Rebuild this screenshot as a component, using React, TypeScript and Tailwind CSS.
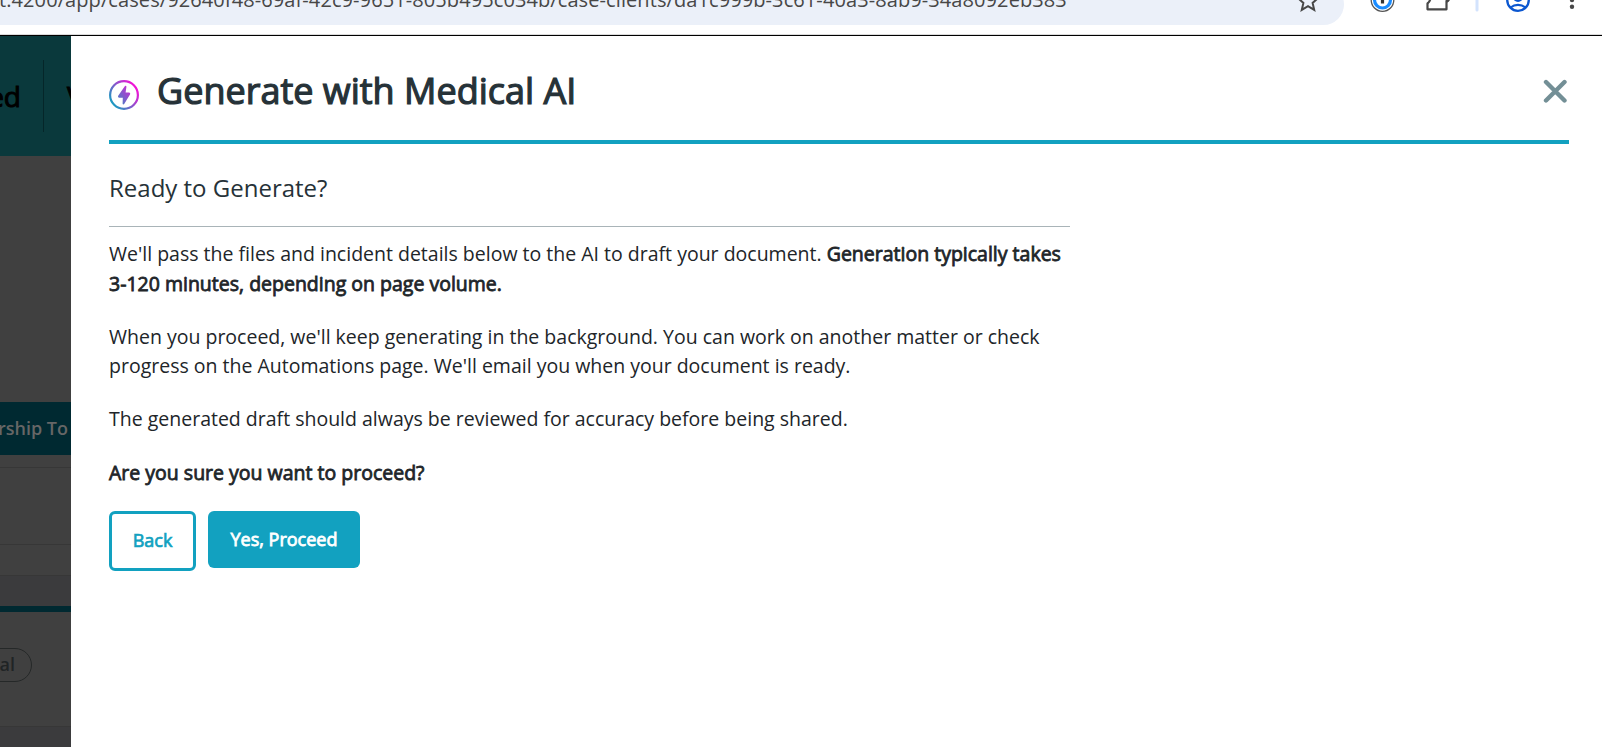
import type { ReactNode } from "react";

function AddressBar() {
  return (
    <div className="relative h-9 w-full shrink-0 overflow-hidden border-b border-black bg-white">
      <div className="absolute -top-4 left-0 h-[41px] w-[1344px] rounded-r-full bg-[#ebf0f9]" />
      <span className="absolute -top-[14px] -left-px text-xl leading-[27px] tracking-[0.090px] whitespace-nowrap text-[#474747]">
        t.4200/app/cases/92640f48-69af-42c9-9651-805b495c034b/case-clients/da1c999b-3c61-40a3-8ab9-34a8092eb383
      </span>
      <svg className="absolute top-0 left-[1240px]" width="362" height="34" viewBox="0 0 362 34" fill="none">
        <path
          d="M68 -9l2.9 6.5 7 .7-5.3 4.7 1.6 7L68 6.1l-6.200 3.800 1.600-7-5.300-4.700 7-.7z"
          stroke="#474747"
          strokeWidth="2"
        />
        <circle cx="142.500" cy="0" r="11.300" stroke="#555" strokeWidth="1.300" />
        <circle cx="142.500" cy="0" r="8" stroke="#1a8cff" strokeWidth="3.200" />
        <path d="M142.500 -6v9.500" stroke="#333" strokeWidth="3.200" />
        <path
          d="M190.500 -3c0 3-1 5-3 6.500V9.300h19v-9"
          stroke="#474747"
          strokeWidth="2.200"
          strokeLinejoin="round"
        />
        <path d="M206 -3h4.500c0 3.500-1.700 5.500-4.500 6z" fill="#474747" />
        <path d="M237 -6v16" stroke="#d3e3fd" strokeWidth="3" strokeLinecap="round" />
        <circle cx="278" cy="0" r="10.800" stroke="#0b57d0" strokeWidth="2.300" />
        <circle cx="278" cy="-3" r="4" stroke="#0b57d0" strokeWidth="2.200" />
        <path d="M270.500 7.500c4.500-3.600 10.500-3.600 15 0" stroke="#0b57d0" strokeWidth="2.200" />
        <circle cx="332" cy="0" r="2.200" fill="#474747" />
        <circle cx="332" cy="6.800" r="2.200" fill="#474747" />
      </svg>
      <div className="absolute bottom-0 h-px w-full bg-[#dadada]" />
    </div>
  );
}

function DimmedPage() {
  return (
    <div className="flex w-[71px] shrink-0 flex-col overflow-hidden bg-[#404040] whitespace-nowrap">
      <div className="flex h-[120px] shrink-0 items-center bg-[#0a393c] text-[28px] text-black">
        <div className="flex w-[43px] shrink-0 justify-end pr-[22px] [-webkit-text-stroke:1px]">ed</div>
        <div className="h-[72px] w-px shrink-0 bg-[#052629]" />
        <span className="ml-[23px] [-webkit-text-stroke:1px]">V</span>
      </div>
      <div className="h-[246px] shrink-0" />
      <div className="flex h-[53px] shrink-0 items-center justify-end bg-[#002931] pr-[3px] pb-0.5 text-lg font-semibold text-[#666]">
        rship To
      </div>
      <div className="h-[13px] shrink-0 border-b border-[#373737]" />
      <div className="h-[77px] shrink-0 border-b border-[#373737]" />
      <div className="h-[31px] shrink-0 border-b border-[#373737]" />
      <div className="h-[30px] shrink-0 bg-[#3b3b3d]" />
      <div className="h-1.5 shrink-0 bg-[#002931]" />
      <div className="h-[115px] shrink-0 border-b border-[#373737] pt-9">
        <div className="-ml-10 flex h-[34px] w-[72px] items-center justify-end rounded-full border border-[#252828] pr-4 pb-0.5 text-lg font-semibold text-[#202425]">
          al
        </div>
      </div>
      <div className="grow bg-[#3b3b3d]" />
    </div>
  );
}

function BoltIcon() {
  return (
    <svg className="mt-2 shrink-0" width="30" height="30" viewBox="0 0 30 30" fill="none">
      <defs>
        <linearGradient id="bolt" x1="2" y1="24" x2="26" y2="6" gradientUnits="userSpaceOnUse">
          <stop stopColor="#12a1c0" />
          <stop offset="1" stopColor="#f312d6" />
        </linearGradient>
      </defs>
      <circle cx="15" cy="15" r="13.900" stroke="url(#bolt)" strokeWidth="2.200" />
      <path
        d="M15.800 6.200 9.200 15.800c-.5.800 0 1.900 1 1.900h3.600l-.2 5.800c0 1 1 1.300 1.600.5l5.800-9.500c.6-1 0-2-1-2h-3.400l.8-5.600c.1-1.200-1-1.700-1.600-.7z"
        fill="url(#bolt)"
      />
    </svg>
  );
}

function Strong({ children }: { children: ReactNode }) {
  return <span className="[-webkit-text-stroke:0.8px]">{children}</span>;
}

export default function App() {
  return (
    <div className="flex h-[747px] w-[1602px] flex-col overflow-hidden bg-white font-['Open_Sans',sans-serif] text-[#212529]">
      <AddressBar />
      <div className="flex min-h-0 grow">
        <DimmedPage />
        <main className="flex grow flex-col pr-[33px] pl-[38px]">
          <header className="flex h-[108px] items-center border-b-4 border-[#12a1c0] pt-[5px]">
            <BoltIcon />
            <h1 className="ml-[18px] text-4xl whitespace-nowrap text-[#263238] [-webkit-text-stroke:1.2px]">
              Generate with Medical AI
            </h1>
            <button className="mr-[2px] ml-auto" aria-label="Close">
              <svg width="24" height="24" viewBox="0 0 24 24">
                <path d="M3 3 21.500 21.500M21.500 3 3 21.500" stroke="#738f96" strokeWidth="4.400" strokeLinecap="round" />
              </svg>
            </button>
          </header>
          <section className="w-[961px] text-[19.5px] leading-[29.25px]">
            <h2 className="h-[83px] border-b border-[#a9b4b8] pt-7 text-2xl leading-8 text-[#263238]">
              Ready to Generate?
            </h2>
            <p className="mt-[12.3px]">
              We'll pass the files and incident details below to the AI to draft your document.{" "}
              <Strong>Generation typically takes 3-120 minutes, depending on page volume.</Strong>
            </p>
            <p className="mt-6">
              When you proceed, we'll keep generating in the background. You can work on another matter or check
              progress on the Automations page. We'll email you when your document is ready.
            </p>
            <p className="mt-6">The generated draft should always be reviewed for accuracy before being shared.</p>
            <p className="mt-[24.4px]">
              <Strong>Are you sure you want to proceed?</Strong>
            </p>
            <div className="mt-[23.8px] flex items-start gap-3 text-lg">
              <button className="h-[60px] w-[87px] rounded-md border-3 border-[#12a1c0] pb-0.5 text-[#12a1c0] [-webkit-text-stroke:0.7px]">
                Back
              </button>
              <button className="h-[57px] w-[152px] rounded-md bg-[#12a1c0] text-white [-webkit-text-stroke:0.8px]">
                Yes, Proceed
              </button>
            </div>
          </section>
        </main>
      </div>
    </div>
  );
}
